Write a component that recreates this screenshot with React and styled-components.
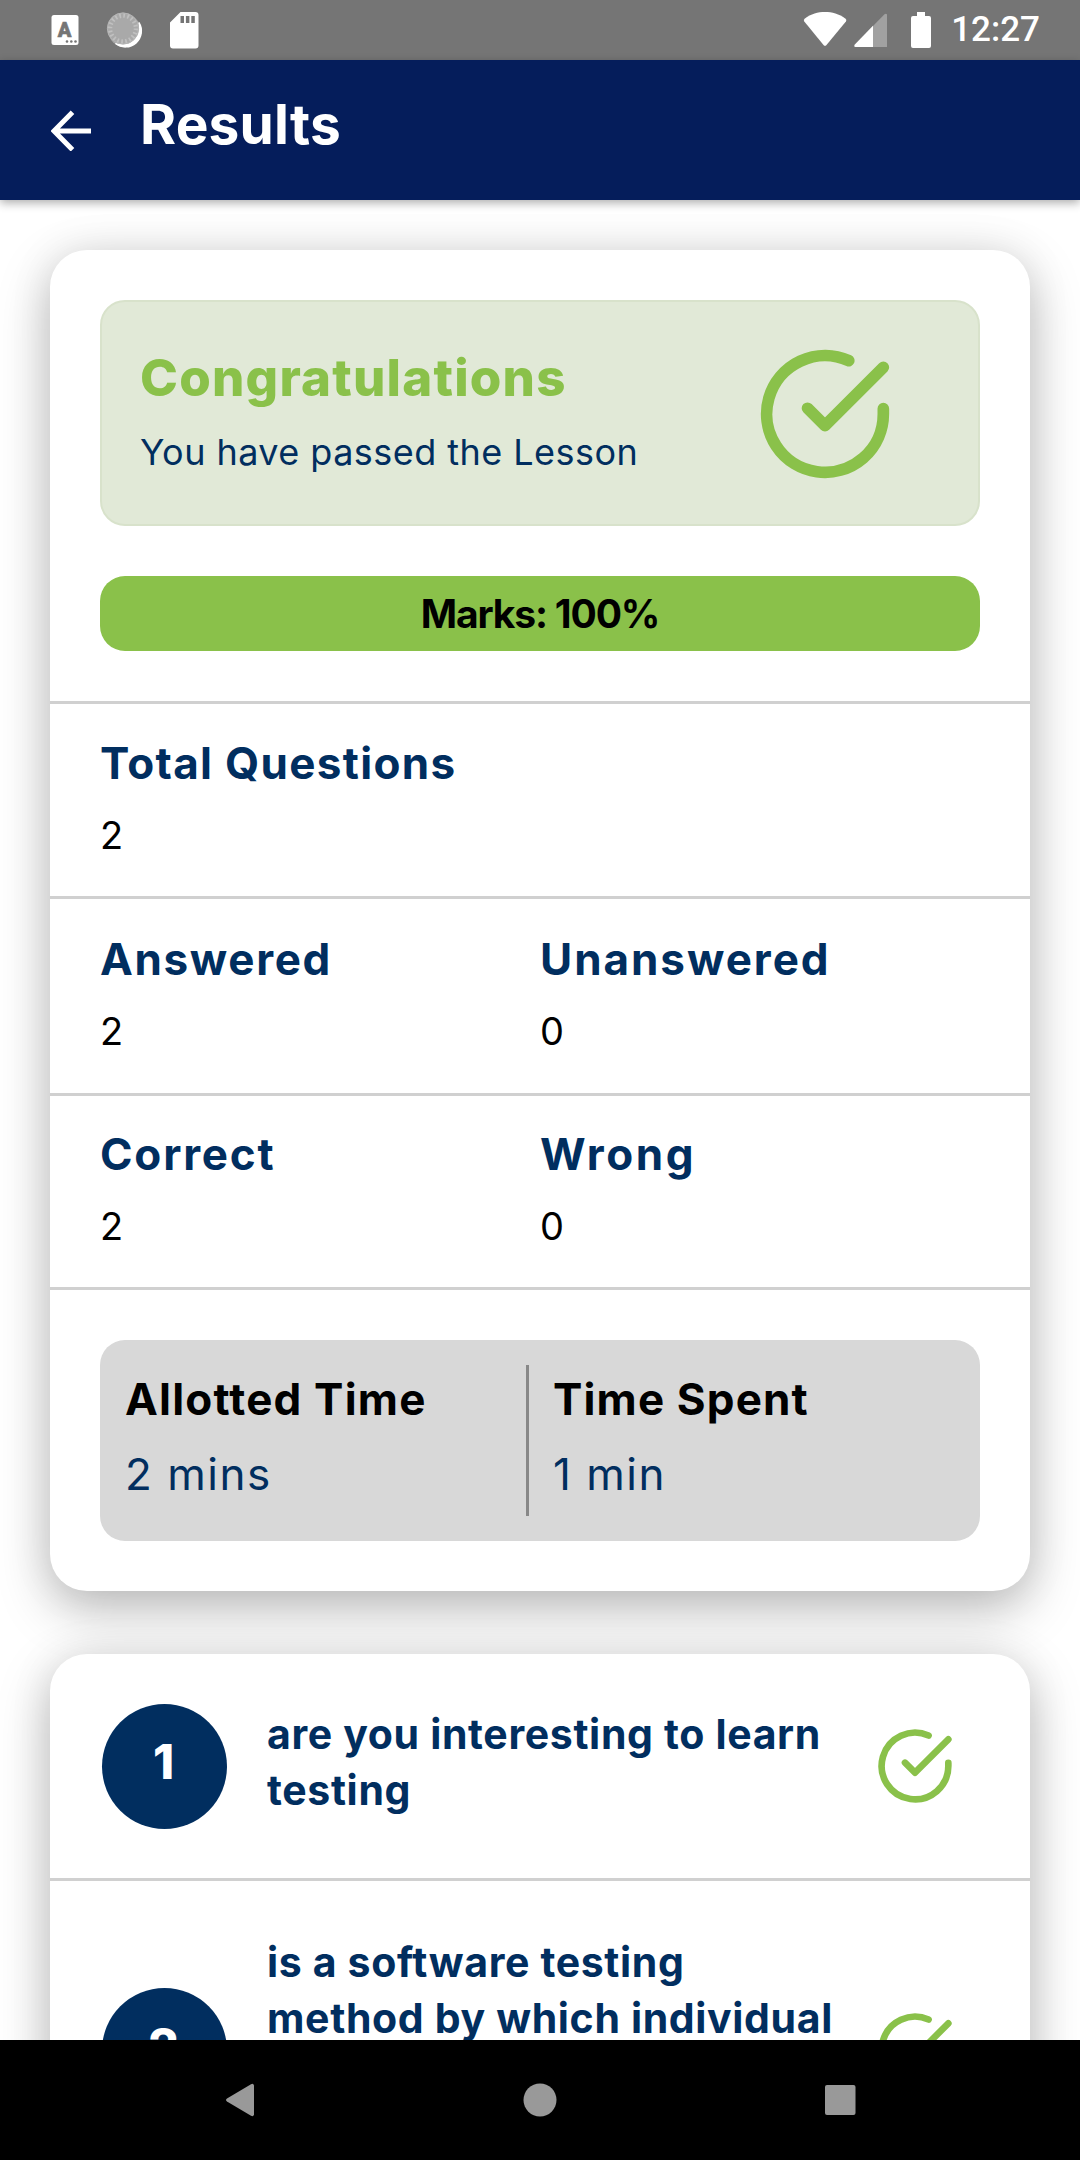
import React from "react";
import styled, { createGlobalStyle } from "styled-components";

const navy = "#012e5f";
const green = "#8ac14a";

const GlobalStyle = createGlobalStyle`
  * { box-sizing: border-box; }
  body {
    margin: 0;
    background: #fff;
    font-family: Inter, "Liberation Sans", sans-serif;
  }
  svg { display: block; flex: none; }
`;

const Screen = styled.div`
  display: flex;
  flex-direction: column;
  width: 1080px;
  height: 2160px;
  overflow: hidden;
  background: #fff;
`;

const StatusBar = styled.div`
  display: flex;
  justify-content: space-between;
  flex: none;
  height: 60px;
  padding: 0 40px 0 51px;
  background: #757575;
`;

const StatusGroup = styled.div`
  display: flex;
  align-items: center;
  gap: ${(p) => p.$gap}px;
`;

const Clock = styled.span`
  margin-left: 14px;
  font: 500 35px/62px Roboto, sans-serif;
  color: #fff;
`;

const AppBar = styled.header`
  position: relative;
  z-index: 1;
  display: flex;
  align-items: center;
  gap: 49px;
  flex: none;
  height: 140px;
  padding-left: 51px;
  background: #051d5b;
  box-shadow: 0 3px 9px rgba(0, 0, 0, 0.32);
`;

const Title = styled.h1`
  margin: 0;
  padding-bottom: 12px;
  font-size: 55px;
  font-weight: 700;
  line-height: 60px;
  letter-spacing: 0.2px;
  color: #fff;
`;

const Content = styled.main`
  display: flex;
  flex-direction: column;
  gap: 63px;
  flex: 1;
  min-height: 0;
  overflow: hidden;
  padding: 50px 50px 0;
`;

const Card = styled.section`
  flex: none;
  border-radius: 37px;
  background: #fff;
  box-shadow: 0 18px 52px rgba(0, 0, 0, 0.26), 0 0 45px rgba(0, 0, 0, 0.08);
`;

const Summary = styled.div`
  display: flex;
  flex-direction: column;
  gap: 50px;
  padding: 50px;
  border-bottom: 3px solid #d0d0d0;
`;

const Banner = styled.div`
  display: flex;
  justify-content: space-between;
  height: 226px;
  padding: 0 83px 0 38px;
  border: 2px solid #d8e2cb;
  border-radius: 25px;
  background: #e1e9d7;
`;

const BannerText = styled.div`
  display: flex;
  flex-direction: column;
  gap: 19px;
  padding-top: 46px;
`;

const BannerTitle = styled.h2`
  margin: 0;
  font-size: 51px;
  font-weight: 800;
  line-height: 60px;
  letter-spacing: 1.22px;
  color: ${green};
`;

const BannerNote = styled.p`
  margin: 0;
  font-size: 36px;
  line-height: 50px;
  letter-spacing: 0.45px;
  color: ${navy};
`;

const BannerIcon = styled.div`
  display: flex;
  align-items: center;
  padding-top: 1px;
`;

const Marks = styled.div`
  height: 75px;
  border-radius: 25px;
  background: ${green};
  font-size: 39px;
  font-weight: 700;
  line-height: 75px;
  letter-spacing: -1.15px;
  text-align: center;
  color: #000;
`;

const StatRow = styled.div`
  display: grid;
  grid-template-columns: 440px 440px;
  align-content: center;
  height: ${(p) => p.$height}px;
  padding: 0 50px 3px;
  border-bottom: 3px solid #d0d0d0;
`;

const Stat = styled.div`
  display: flex;
  flex-direction: column;
  gap: 12px;
`;

const StatLabel = styled.div`
  font-size: 44px;
  font-weight: 700;
  line-height: 60px;
  letter-spacing: ${(p) => p.$spacing}px;
  white-space: nowrap;
  color: ${navy};
`;

const StatValue = styled.div`
  font-size: 38px;
  line-height: 60px;
  color: #000;
`;

const TimeSection = styled.div`
  padding: 50px;
`;

const TimeBox = styled.div`
  display: flex;
  height: 201px;
  padding: 25px;
  border-radius: 25px;
  background: #d8d8d8;
`;

const TimeCell = styled.div`
  display: flex;
  flex-direction: column;
  gap: 15px;
  padding-top: 4px;
  width: 401px;
`;

const TimeDivider = styled.div`
  width: 3px;
  margin-right: 24px;
  background: #888;
`;

const TimeLabel = styled(StatLabel)`
  color: #000;
`;

const TimeValue = styled.div`
  font-size: 44px;
  line-height: 60px;
  letter-spacing: 1.5px;
  color: ${navy};
`;

const QuestionRow = styled.div`
  display: flex;
  align-items: center;
  height: ${(p) => p.$height}px;
  padding: 0 75px 0 52px;
  & + & { border-top: 3px solid #d0d0d0; }
`;

const Badge = styled.div`
  flex: none;
  width: 125px;
  height: 125px;
  padding: 0 2px 10px 0;
  border-radius: 50%;
  background: ${navy};
  font-size: 48px;
  font-weight: 800;
  line-height: 115px;
  text-align: center;
  color: #fff;
`;

const QuestionText = styled.p`
  width: 575px;
  min-height: ${(p) => p.$lines * 56}px;
  margin: -9px auto 0 40px;
  font-size: 41px;
  font-weight: 700;
  line-height: 56px;
  letter-spacing: 0.65px;
  color: ${navy};
`;

const NavBar = styled.nav`
  display: flex;
  align-items: center;
  justify-content: space-between;
  flex: none;
  height: 120px;
  padding: 0 224px 0 225px;
  background: #000;
`;

function CheckIcon({ size }) {
  return (
    <svg width={size} height={size} viewBox="0 0 24 24" fill="none" stroke={green}
      strokeWidth="2" strokeLinecap="round" strokeLinejoin="round">
      <path d="M22 11.08V12a10 10 0 1 1-5.93-9.14" />
      <path d="M22 4L12 14.01l-3-3" />
    </svg>
  );
}

function KeyboardIcon() {
  return (
    <svg width="28" height="60" viewBox="0 0 28 60">
      <rect x="0.5" y="15" width="27" height="30" rx="2.5" fill="#fff" />
      <text x="13.5" y="36.5" textAnchor="middle" fontFamily="Roboto, sans-serif" fontWeight="900"
        fontSize="20" fill="#757575" stroke="#757575" strokeWidth="0.6">A</text>
      <g fill="#757575">
        <circle cx="16" cy="41.5" r="1.3" />
        <circle cx="20.3" cy="41.5" r="1.3" />
        <circle cx="24.5" cy="41.5" r="1.3" />
      </g>
    </svg>
  );
}

function SpinnerIcon() {
  return (
    <svg width="38" height="60" viewBox="0 0 38 60">
      <circle cx="19.6" cy="30.6" r="16.4" fill="#fff" opacity="0.35" />
      <path d="M34 22.5A16 16 0 0 1 10.5 43.5A18 18 0 0 0 34 22.5Z" fill="#fff" stroke="#fff" strokeWidth="1.4" />
      <circle cx="18" cy="28.5" r="15.8" fill="#a9a9a9" />
      <circle cx="18" cy="28.5" r="13" fill="none" stroke="#c0c0c0" strokeWidth="4.5" strokeDasharray="1.7 2.38" />
      <circle cx="18" cy="28.5" r="15.6" fill="none" stroke="#b6b6b6" strokeWidth="1" />
    </svg>
  );
}

function SdCardIcon() {
  return (
    <svg width="30" height="60" viewBox="0 0 30 60">
      <path d="M11.5 12H26.5a3 3 0 0 1 3 3V45.500a3 3 0 0 1-3 3H4a3 3 0 0 1-3-3V22.500Z" fill="#fff" />
      <path d="M11.500 16h3.500v7h-3.500zM16.900 16h3.500v7h-3.500zM22.300 16h3.500v7h-3.500z" fill="#757575" />
    </svg>
  );
}

function SignalIcons() {
  return (
    <svg width="128" height="60" viewBox="0 0 128 60" fill="#fff">
      <path d="M1.300 21.500Q.2 20 1.600 18.700C8 13.800 15 12 22 12s14 1.800 20.600 6.700q1.400 1.300.3 2.800L23.500 45q-1.500 1.700-3 0Z" />
      <path d="M84 14.600V47H52.500q-2-.6-.6-2.600L81.500 14.200q1.700-1.200 2.500.4Z" opacity="0.32" />
      <path d="M70 25.800V47H52.500q-2-.6-.6-2.600Z" />
      <path d="M114 12h8v4h4q2 0 2 2v28q0 2-2 2h-16q-2 0-2-2V18q0-2 2-2h4Z" />
    </svg>
  );
}

function BackArrow() {
  return (
    <svg width="40" height="42" viewBox="0 0 40 42" fill="none" stroke="#fff" strokeWidth="5">
      <path d="M40 22H4M21.500 3.200L3 22l18.500 18.800" />
    </svg>
  );
}

const stats = [
  { height: 195, items: [["Total Questions", 2, 1.32]] },
  { height: 197, items: [["Answered", 2, 1.65], ["Unanswered", 0, 1.95]] },
  { height: 194, items: [["Correct", 2, 1.8], ["Wrong", 0, 2.6]] },
];

const questions = [
  { text: "are you interesting to learn testing", height: 224, lines: 2 },
  { text: "is a software testing method by which individual", height: 341, lines: 4 },
];

export default function App() {
  return (
    <Screen>
      <GlobalStyle />
      <StatusBar>
        <StatusGroup $gap={26}>
          <KeyboardIcon />
          <SpinnerIcon />
          <SdCardIcon />
        </StatusGroup>
        <StatusGroup $gap={6}>
          <SignalIcons />
          <Clock>12:27</Clock>
        </StatusGroup>
      </StatusBar>
      <AppBar>
        <BackArrow />
        <Title>Results</Title>
      </AppBar>
      <Content>
        <Card>
          <Summary>
            <Banner>
              <BannerText>
                <BannerTitle>Congratulations</BannerTitle>
                <BannerNote>You have passed the Lesson</BannerNote>
              </BannerText>
              <BannerIcon><CheckIcon size={140} /></BannerIcon>
            </Banner>
            <Marks>Marks: 100%</Marks>
          </Summary>
          {stats.map((row) => (
            <StatRow key={row.items[0][0]} $height={row.height}>
              {row.items.map(([label, value, spacing]) => (
                <Stat key={label}>
                  <StatLabel $spacing={spacing}>{label}</StatLabel>
                  <StatValue>{value}</StatValue>
                </Stat>
              ))}
            </StatRow>
          ))}
          <TimeSection>
            <TimeBox>
              <TimeCell>
                <TimeLabel $spacing={1.2}>Allotted Time</TimeLabel>
                <TimeValue>2 mins</TimeValue>
              </TimeCell>
              <TimeDivider />
              <TimeCell>
                <TimeLabel $spacing={1.15}>Time Spent</TimeLabel>
                <TimeValue>1 min</TimeValue>
              </TimeCell>
            </TimeBox>
          </TimeSection>
        </Card>
        <Card>
          {questions.map((q, i) => (
            <QuestionRow key={q.text} $height={q.height}>
              <Badge>{i + 1}</Badge>
              <QuestionText $lines={q.lines}>{q.text}</QuestionText>
              <CheckIcon size={80} />
            </QuestionRow>
          ))}
        </Card>
      </Content>
      <NavBar>
        <svg width="30" height="34" viewBox="0 0 30 34" fill="#999">
          <path d="M29 2.500V31.500q-.6 2.500-3 1.200L2 18.500q-2-1.500 0-3L26 1.300Q28.400 0 29 2.500Z" />
        </svg>
        <svg width="34" height="34" viewBox="0 0 34 34" fill="#999">
          <circle cx="17" cy="17" r="16.5" />
        </svg>
        <svg width="31" height="30" viewBox="0 0 31 30" fill="#999">
          <rect width="30.500" height="30" rx="2" />
        </svg>
      </NavBar>
    </Screen>
  );
}
